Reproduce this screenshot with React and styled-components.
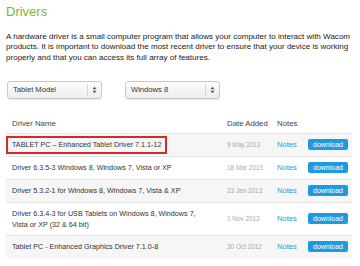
import React from "react";
import styled, { createGlobalStyle } from "styled-components";

const Global = createGlobalStyle`
  html, body { margin: 0; padding: 0; background: #fff; }
  body { font-family: "Liberation Sans", Arial, sans-serif; color: #333; }
`;

const Page = styled.div`
  width: 360px;
  height: 266px;
  overflow: hidden;
  padding: 4px 8px 0 6px;
  box-sizing: border-box;
`;

const Title = styled.h2`
  margin: 0;
  font-size: 13px;
  font-weight: normal;
  color: #7cb82f;
  line-height: 16px;
`;

const Para = styled.p`
  margin: 12px 0 0 0;
  font-size: 8.05px;
  line-height: 10.3px;
  color: #1a1a1a;
  white-space: nowrap;
`;

const Filters = styled.div`
  display: flex;
  gap: 23px;
  margin-top: 18px;
  padding-left: 1px;
`;

const Select = styled.div`
  position: relative;
  width: 95px;
  height: 18px;
  box-sizing: border-box;
  border: 1px solid #c9c9c9;
  border-radius: 3px;
  background: linear-gradient(#ffffff, #ececec);
  box-shadow: 0 1px 1px rgba(0,0,0,0.08);
  display: flex;
  align-items: center;
  font-size: 7.6px;
  color: #333;
  padding-left: 5px;
`;

const SelectArrow = styled.span`
  position: absolute;
  right: 0;
  top: 2px;
  bottom: 2px;
  width: 13px;
  border-left: 1px solid #d6d6d6;
  display: flex;
  align-items: center;
  justify-content: center;
`;

const Table = styled.div`
  margin-top: 18px;
  width: 346px;
`;

const Row = styled.div`
  display: grid;
  grid-template-columns: 221px 50px 30px 45px;
  align-items: center;
  background: ${p => (p.$shade ? "#f6f6f6" : "#fff")};
  border-top: ${p => (p.$head ? "none" : "1px solid #e4e4e4")};
  min-height: ${p => (p.$head ? "14px" : "22px")};
  padding: ${p => (p.$head ? "0 0 2px 0" : "0")};
`;

const HeadCell = styled.div`
  font-size: 7.8px;
  color: #444;
  padding-left: ${p => p.$pl || "0"};
`;

const NameCell = styled.div`
  font-size: 7.2px;
  line-height: 11px;
  color: #333;
  padding: ${p => (p.$multi ? "5px 0 5px 6px" : "0 0 0 6px")};
`;

const Marked = styled.span`
  display: inline-block;
  border: 2px solid #d42a2a;
  padding: 1.5px 4px 1.5px 4px;
  margin-left: -6px;
`;

const DateCell = styled.div`
  font-size: 6.4px;
  color: #aaa;
`;

const NotesLink = styled.div`
  font-size: 7.6px;
  color: #2b9ad8;
`;

const DownloadBtn = styled.div`
  width: 40px;
  height: 11px;
  background: #1d9be0;
  border-radius: 2px;
  color: #fff;
  font-size: 7px;
  display: flex;
  align-items: center;
  justify-content: center;
  margin-left: 1px;
`;

const Arrows = () => (
  <svg width="5" height="8" viewBox="0 0 5 8">
    <path d="M0.5 3.2 L2.5 0.8 L4.5 3.2 Z" fill="#555" />
    <path d="M0.5 4.8 L2.5 7.2 L4.5 4.8 Z" fill="#555" />
  </svg>
);

const rows = [
  { name: "TABLET PC – Enhanced Tablet Driver 7.1.1-12", date: "9 May 2013", marked: true },
  { name: "Driver 6.3.5-3 Windows 8, Windows 7, Vista or XP", date: "18 Mar 2013" },
  { name: "Driver 5.3.2-1 for Windows 8, Windows 7, Vista & XP", date: "23 Jan 2013" },
  { name: ["Driver 6.3.4-3 for USB Tablets on Windows 8, Windows 7,", "Vista or XP (32 & 64 bit)"], date: "1 Nov 2012" },
  { name: "Tablet PC - Enhanced Graphics Driver 7.1.0-8", date: "30 Oct 2012" },
];

export default function App() {
  return (
    <Page>
      <Global />
      <Title>Drivers</Title>
      <Para>
        A hardware driver is a small computer program that allows your computer to interact with Wacom
        <br />
        products. It is important to download the most recent driver to ensure that your device is working
        <br />
        properly and that you can access its full array of features.
      </Para>
      <Filters>
        <Select>
          Tablet Model
          <SelectArrow><Arrows /></SelectArrow>
        </Select>
        <Select>
          Windows 8
          <SelectArrow><Arrows /></SelectArrow>
        </Select>
      </Filters>
      <Table>
        <Row $head>
          <HeadCell $pl="6px">Driver Name</HeadCell>
          <HeadCell>Date Added</HeadCell>
          <HeadCell>Notes</HeadCell>
          <div />
        </Row>
        {rows.map((r, i) => (
          <Row key={i} $shade={i % 2 === 0}>
            <NameCell $multi={Array.isArray(r.name)}>
              {r.marked ? (
                <Marked>{r.name}</Marked>
              ) : Array.isArray(r.name) ? (
                <>
                  {r.name[0]}
                  <br />
                  {r.name[1]}
                </>
              ) : (
                r.name
              )}
            </NameCell>
            <DateCell>{r.date}</DateCell>
            <NotesLink>Notes</NotesLink>
            <DownloadBtn>download</DownloadBtn>
          </Row>
        ))}
      </Table>
    </Page>
  );
}
